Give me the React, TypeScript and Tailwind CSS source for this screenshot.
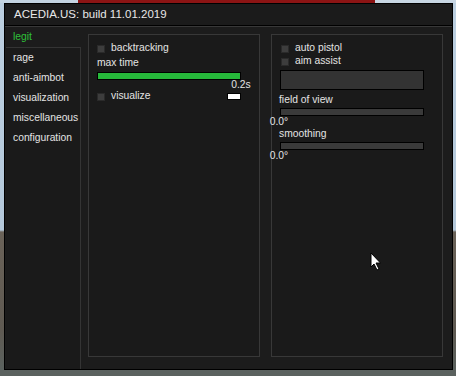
const tabs = ["legit", "rage", "anti-aimbot", "visualization", "miscellaneous", "configuration"]

function Check(props: { label: string; className?: string }) {
    return (
        <div className={`flex items-center h-[13px] ${props.className ?? ""}`}>
            <div className="w-[8px] h-[8px] bg-[#3d3d3d] border border-[#2a2a2a]" />
            <span className="ml-[6px] leading-none">{props.label}</span>
        </div>
    )
}

function Cursor() {
    return (
        <svg className="absolute left-[370px] top-[252px]" width="12" height="19" viewBox="0 0 12 19">
            <path d="M1 1 L1 15 L4 12 L7 18 L9 17 L6 11 L10.5 11 Z" fill="#fff" stroke="#000" strokeWidth="1" />
        </svg>
    )
}

export default function App() {
    return (
        <div className="relative w-[456px] h-[376px] overflow-hidden bg-[linear-gradient(to_bottom,#bccfe0_0,#b4c8da_230px,#6a6258_232px,#5f5a52_330px,#5b625f_370px)] font-['Liberation_Sans',sans-serif] text-[10.3px] text-[#e4e4e4]">
            {/* scene strip above the window */}
            <div className="flex h-[3px]">
                <div className="w-[78px] bg-[#c4d4e2]" />
                <div className="w-[297px] bg-[#8c1414]" />
                <div className="flex-1 bg-[#c8d6e3]" />
            </div>

            <div className="ml-[4px] w-[449px] h-[367px] border border-black bg-[#1c1c1c] flex flex-col">
                <div className="h-[22px] flex items-center pl-[9px] border-b border-black text-[11.5px] text-[#e8e8e8] bg-[#1b1b1b]">
                    ACEDIA.US: build 11.01.2019
                </div>
                <div className="flex-1 flex border-t border-[#383838]">
                    <div className="w-[76px] flex flex-col">
                        <div className="h-[20px] flex items-center pl-[8px] text-[#2fc13a]">{tabs[0]}</div>
                        <div className="flex-1 border-t border-r border-[#343434] bg-[#1a1a1a] ml-[1px] pb-[1px]">
                            {tabs.slice(1).map((t) => (
                                <div key={t} className="h-[20px] flex items-center pl-[7px]">{t}</div>
                            ))}
                        </div>
                    </div>

                    <div className="flex-1 flex gap-[11px] pl-[7px] pt-[7px] pb-[12px] pr-[8px]">
                        <div className="w-[172px] border border-[#383838] bg-[#1a1a1a] pl-[8px] pt-[7px]">
                            <Check label="backtracking" />
                            <div className="mt-[2px] h-[13px] leading-none flex items-center">max time</div>
                            <div className="mt-[2px] w-[144px] h-[8px] bg-[#26b83a] border border-black" />
                            <div className="w-[144px] h-[10px] leading-none">
                                <span className="inline-block ml-[144px] -translate-x-1/2">0.2s</span>
                            </div>
                            <div className="w-[144px] flex items-center justify-between">
                                <Check label="visualize" />
                                <div className="w-[14px] h-[7px] bg-white border border-black" />
                            </div>
                        </div>

                        <div className="w-[172px] border border-[#383838] bg-[#1a1a1a] pl-[8px] pt-[7px]">
                            <Check label="auto pistol" className="ml-[1px]" />
                            <Check label="aim assist" className="ml-[1px]" />
                            <div className="mt-[2px] w-[144px] h-[20px] bg-[#333] border border-black" />
                            <div className="mt-[4px] h-[13px] leading-none flex items-center -ml-[1px]">field of view</div>
                            <div className="mt-[1px] w-[144px] h-[8px] bg-[#3a3a3a] border border-black" />
                            <div className="h-[12px] leading-none">
                                <span className="inline-block -translate-x-1/2 -ml-[1px] pt-[1px]">0.0°</span>
                            </div>
                            <div className="h-[13px] leading-none flex items-center -ml-[1px]">smoothing</div>
                            <div className="mt-[1px] w-[144px] h-[8px] bg-[#3a3a3a] border border-black" />
                            <div className="h-[12px] leading-none">
                                <span className="inline-block -translate-x-1/2 -ml-[1px] pt-[1px]">0.0°</span>
                            </div>
                        </div>
                    </div>
                </div>
            </div>
            <Cursor />
        </div>
    )
}
